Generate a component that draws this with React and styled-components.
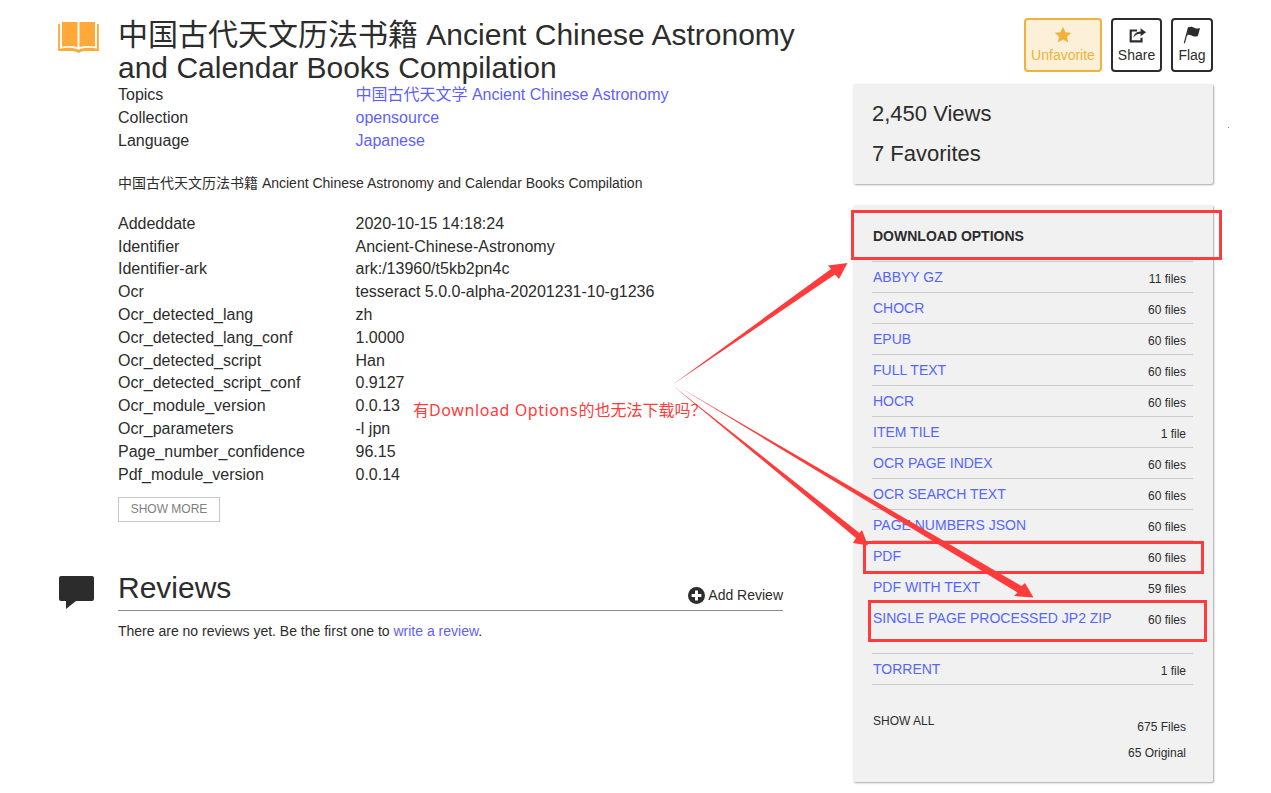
import React from "react";
import { styled, createGlobalStyle } from "styled-components";

const topMeta = [
  { label: "Topics", value: "中国古代天文学 Ancient Chinese Astronomy" },
  { label: "Collection", value: "opensource" },
  { label: "Language", value: "Japanese" },
];

const moreMeta = [
  ["Addeddate", "2020-10-15 14:18:24"],
  ["Identifier", "Ancient-Chinese-Astronomy"],
  ["Identifier-ark", "ark:/13960/t5kb2pn4c"],
  ["Ocr", "tesseract 5.0.0-alpha-20201231-10-g1236"],
  ["Ocr_detected_lang", "zh"],
  ["Ocr_detected_lang_conf", "1.0000"],
  ["Ocr_detected_script", "Han"],
  ["Ocr_detected_script_conf", "0.9127"],
  ["Ocr_module_version", "0.0.13"],
  ["Ocr_parameters", "-l jpn"],
  ["Page_number_confidence", "96.15"],
  ["Pdf_module_version", "0.0.14"],
];

const downloads = [
  ["ABBYY GZ", "11 files"],
  ["CHOCR", "60 files"],
  ["EPUB", "60 files"],
  ["FULL TEXT", "60 files"],
  ["HOCR", "60 files"],
  ["ITEM TILE", "1 file"],
  ["OCR PAGE INDEX", "60 files"],
  ["OCR SEARCH TEXT", "60 files"],
  ["PAGE NUMBERS JSON", "60 files"],
  ["PDF", "60 files"],
  ["PDF WITH TEXT", "59 files"],
  ["SINGLE PAGE PROCESSED JP2 ZIP", "60 files", true],
  ["TORRENT", "1 file"],
];

const App = () => {
  return (
    <>
      <GlobalStyle />
      <Page>
        <Main>
          <TitleRow>
            <BookIcon viewBox="0 0 42 34">
              <path
                fill="#ffa93b"
                d="M4 2h16v26c-4-1.5-11-1.5-16-.5zM22 2h16v25.500c-5-1-12-1-16 .5z"
              />
              <path
                fill="#ffa93b"
                d="M0 4h2v25.5c6-1.3 14-1.3 19 1.2 5-2.5 13-2.5 19-1.2V4h2v28H27c-2 0-4 1-6 2-2-1-4-2-6-2H0z"
              />
            </BookIcon>
            <Title>中国古代天文历法书籍 Ancient Chinese Astronomy and Calendar Books Compilation</Title>
          </TitleRow>
          <Content>
            <MetaList>
              {topMeta.map((m) => (
                <MetaRow key={m.label}>
                  <MetaLabel>{m.label}</MetaLabel>
                  <MetaLink>{m.value}</MetaLink>
                </MetaRow>
              ))}
            </MetaList>
            <Description>
              中国古代天文历法书籍 Ancient Chinese Astronomy and Calendar Books Compilation
            </Description>
            <MetaList>
              {moreMeta.map(([label, value]) => (
                <MetaRow key={label}>
                  <MetaLabel>{label}</MetaLabel>
                  <span>{value}</span>
                </MetaRow>
              ))}
            </MetaList>
            <ShowMore>SHOW MORE</ShowMore>
          </Content>
          <ReviewsRow>
            <CommentIcon viewBox="0 0 35 33">
              <path
                fill="#2c2c2c"
                d="M2 0h31a2 2 0 0 1 2 2v21a2 2 0 0 1-2 2H17L7 33v-8H2a2 2 0 0 1-2-2V2a2 2 0 0 1 2-2z"
              />
            </CommentIcon>
            <ReviewsBody>
              <ReviewsHead>
                <ReviewsTitle>Reviews</ReviewsTitle>
                <AddReview>
                  <PlusIcon viewBox="0 0 16 16">
                    <circle cx="8" cy="8" r="8" fill="#2c2c2c" />
                    <path fill="#fff" d="M6.6 3.4h2.8v3.2h3.2v2.8H9.4v3.2H6.6V9.4H3.4V6.6h3.2z" />
                  </PlusIcon>
                  Add Review
                </AddReview>
              </ReviewsHead>
              <ReviewsNote>
                There are no reviews yet. Be the first one to <NoteLink>write a review</NoteLink>.
              </ReviewsNote>
            </ReviewsBody>
          </ReviewsRow>
        </Main>

        <Aside>
          <Actions>
            <ActionButton $active $width={78}>
              <ActionIcon viewBox="0 0 20 20">
                <path
                  fill="#f0b23a"
                  d="M10 .8l2.7 6.1 6.6.6-5 4.4 1.5 6.5L10 15l-5.8 3.4 1.5-6.5-5-4.4 6.6-.6z"
                />
              </ActionIcon>
              Unfavorite
            </ActionButton>
            <ActionButton $width={51}>
              <ActionIcon viewBox="0 0 20 20">
                <path
                  fill="none"
                  stroke="#2c2c2c"
                  strokeWidth="2.4"
                  d="M10 5H3v12h12v-4"
                />
                <path fill="#2c2c2c" d="M6 13c.5-4 3.500-6.800 8-7V2.500L20 7l-6 4.500V8.600c-3.400-.2-6 1.300-8 4.400z" />
              </ActionIcon>
              Share
            </ActionButton>
            <ActionButton $width={42}>
              <ActionIcon viewBox="0 0 20 20">
                <path fill="#2c2c2c" d="M6 1.500c3-1.600 5-.4 7 .6 2 .9 3.500 1 6 0l-2.500 9c-3 1.300-5 .3-7-.6-1.700-.8-3-1-5 0z" />
                <path fill="none" stroke="#2c2c2c" strokeWidth="1.4" d="M6.200 1.500L1.500 19" />
              </ActionIcon>
              Flag
            </ActionButton>
          </Actions>

          <StatsPanel>
            <StatLine>2,450 Views</StatLine>
            <StatLine>7 Favorites</StatLine>
          </StatsPanel>

          <DownloadPanel>
            <DownloadHeading>DOWNLOAD OPTIONS</DownloadHeading>
            <DownloadList>
              {downloads.map(([name, count, tall]) => (
                <DownloadRow key={name} $tall={tall}>
                  <DownloadLink>{name}</DownloadLink>
                  <FileCount>{count}</FileCount>
                </DownloadRow>
              ))}
            </DownloadList>
            <DownloadFooter>
              <ShowAll>SHOW ALL</ShowAll>
              <Totals>
                <span>675 Files</span>
                <span>65 Original</span>
              </Totals>
            </DownloadFooter>
          </DownloadPanel>
        </Aside>

        {/* screenshot annotation drawn on top of the page */}
        <Annotation viewBox="0 0 1271 793">
          <g fill="none" stroke="#ff3b3b" strokeWidth="3">
            <rect x="852.5" y="211.5" width="368" height="47" />
            <rect x="864.5" y="542.5" width="338" height="30" />
            <rect x="869.5" y="601.5" width="336" height="39" />
          </g>
          <g fill="#ff3b3b">
            <polygon points="672,385 831,269 828,265.5 847.5,263 839,279 835,274.5" />
            <polygon points="672,385 859.5,533 862,530 868,545.5 853,543 856,538" />
            <polygon points="679,387 1021.5,586 1025,583 1033.5,597.5 1014,596 1017.5,592.5" />
            <rect x="1228" y="127" width="1" height="1" />
          </g>
        </Annotation>
        <AnnotationText>
          有<AnnotationLatin>Download Options</AnnotationLatin>的也无法下载吗？
        </AnnotationText>
      </Page>
    </>
  );
};

const GlobalStyle = createGlobalStyle`
  html, body {
    margin: 0;
    padding: 0;
    background: #fff;
  }
  body {
    font-family: "Liberation Sans", "Noto Sans CJK SC", sans-serif;
    color: #2c2c2c;
  }
`;
const Page = styled.div`
  position: relative;
  display: flex;
  justify-content: space-between;
  width: 1271px;
  height: 793px;
  padding: 0 58px;
  box-sizing: border-box;
  overflow: hidden;
`;
const Main = styled.div`
  display: flex;
  flex-direction: column;
  width: 725px;
`;
const TitleRow = styled.div`
  display: flex;
  gap: 19px;
  padding-top: 18px;
`;
const BookIcon = styled.svg`
  width: 41px;
  height: 33px;
  flex: none;
  margin-top: 2px;
`;
const Title = styled.h1`
  margin: 0;
  width: 690px;
  flex: none;
  font-size: 30px;
  line-height: 33px;
  font-weight: 400;
`;
const Content = styled.div`
  display: flex;
  flex-direction: column;
  padding-left: 60px;
`;
const MetaList = styled.div`
  display: flex;
  flex-direction: column;
`;
const MetaRow = styled.div`
  display: flex;
  font-size: 16px;
  line-height: 22.8px;
`;
const MetaLabel = styled.span`
  width: 237.5px;
  flex: none;
`;
const MetaLink = styled.a`
  color: #5f5fff;
`;
const Description = styled.p`
  margin: 22px 0 20.4px;
  font-size: 14px;
  line-height: 18px;
`;
const ShowMore = styled.div`
  width: 102px;
  height: 25px;
  margin-top: 10.4px;
  box-sizing: border-box;
  border: 1px solid #c9c9c9;
  color: #808080;
  font-size: 12px;
  line-height: 23px;
  text-align: center;
`;
const ReviewsRow = styled.div`
  display: flex;
  gap: 24px;
  margin-top: 50px;
`;
const CommentIcon = styled.svg`
  width: 35px;
  height: 33px;
  flex: none;
  margin: 4px 0 0 1px;
`;
const ReviewsBody = styled.div`
  flex: 1;
  display: flex;
  flex-direction: column;
`;
const ReviewsHead = styled.div`
  display: flex;
  justify-content: space-between;
  align-items: flex-end;
  height: 38px;
  border-bottom: 1px solid #8c8c8c;
  box-sizing: content-box;
`;
const ReviewsTitle = styled.h2`
  margin: 0 0 6px;
  font-size: 30px;
  line-height: 33px;
  font-weight: 400;
`;
const AddReview = styled.div`
  display: flex;
  align-items: center;
  gap: 3px;
  font-size: 14px;
  line-height: 16px;
  margin-bottom: 6px;
`;
const PlusIcon = styled.svg`
  width: 17px;
  height: 17px;
`;
const ReviewsNote = styled.p`
  margin: 12px 0 0;
  font-size: 14px;
  line-height: 16px;
`;
const NoteLink = styled.a`
  color: #5f5fff;
`;
const Aside = styled.aside`
  display: flex;
  flex-direction: column;
  width: 360px;
`;
const Actions = styled.div`
  display: flex;
  justify-content: flex-end;
  gap: 9px;
  padding-top: 18px;
`;
const ActionButton = styled.div`
  display: flex;
  flex-direction: column;
  align-items: center;
  width: ${({ $width }) => $width}px;
  height: 54px;
  box-sizing: border-box;
  padding-top: 6px;
  border: 2px solid ${({ $active }) => ($active ? "#f0b23a" : "#2c2c2c")};
  border-radius: 4px;
  background: ${({ $active }) => ($active ? "#fdf0d9" : "#fff")};
  color: ${({ $active }) => ($active ? "#f0b23a" : "#2c2c2c")};
  font-size: 14px;
  line-height: 16px;
`;
const ActionIcon = styled.svg`
  width: 18px;
  height: 18px;
  margin-bottom: 3px;
`;
const Panel = styled.div`
  background: #f1f1f1;
  border-radius: 2px;
  box-shadow: 1px 1px 2px rgba(0, 0, 0, 0.35);
`;
const StatsPanel = styled(Panel)`
  display: flex;
  flex-direction: column;
  gap: 15px;
  height: 100px;
  margin-top: 12px;
  padding: 17px 19px;
  box-sizing: border-box;
`;
const StatLine = styled.div`
  font-size: 22px;
  line-height: 25px;
`;
const DownloadPanel = styled(Panel)`
  height: 577px;
  margin-top: 21px;
  padding: 0 20px 0 19px;
  box-sizing: border-box;
`;
const DownloadHeading = styled.div`
  height: 56px;
  padding: 23px 0 0 1px;
  box-sizing: border-box;
  font-size: 14px;
  line-height: 16px;
  font-weight: 700;
`;
const DownloadList = styled.div`
  display: flex;
  flex-direction: column;
  border-bottom: 1px solid #cbcbcb;
`;
const DownloadRow = styled.div`
  display: flex;
  justify-content: space-between;
  height: ${({ $tall }) => ($tall ? 51 : 31)}px;
  box-sizing: border-box;
  padding: 7px 7px 0 1px;
  border-top: 1px solid #cbcbcb;
`;
const DownloadLink = styled.a`
  color: #5566ff;
  font-size: 14px;
  line-height: 16px;
`;
const FileCount = styled.span`
  font-size: 12px;
  line-height: 16px;
  margin-top: 2px;
`;
const DownloadFooter = styled.div`
  display: flex;
  justify-content: space-between;
  padding: 28px 7px 0 1px;
`;
const ShowAll = styled.span`
  font-size: 12px;
  line-height: 16px;
`;
const Totals = styled.div`
  display: flex;
  flex-direction: column;
  align-items: flex-end;
  gap: 10px;
  padding-top: 6px;
  font-size: 12px;
  line-height: 16px;
`;
const Annotation = styled.svg`
  position: absolute;
  top: 0;
  left: 0;
  width: 1271px;
  height: 793px;
  pointer-events: none;
`;
const AnnotationText = styled.div`
  position: absolute;
  left: 413px;
  top: 400px;
  color: #ff3b3b;
  font-size: 16px;
  line-height: 20px;
  white-space: nowrap;
`;
const AnnotationLatin = styled.span`
  font-family: "Noto Sans", sans-serif;
  letter-spacing: 0.6px;
`;

export default App;
